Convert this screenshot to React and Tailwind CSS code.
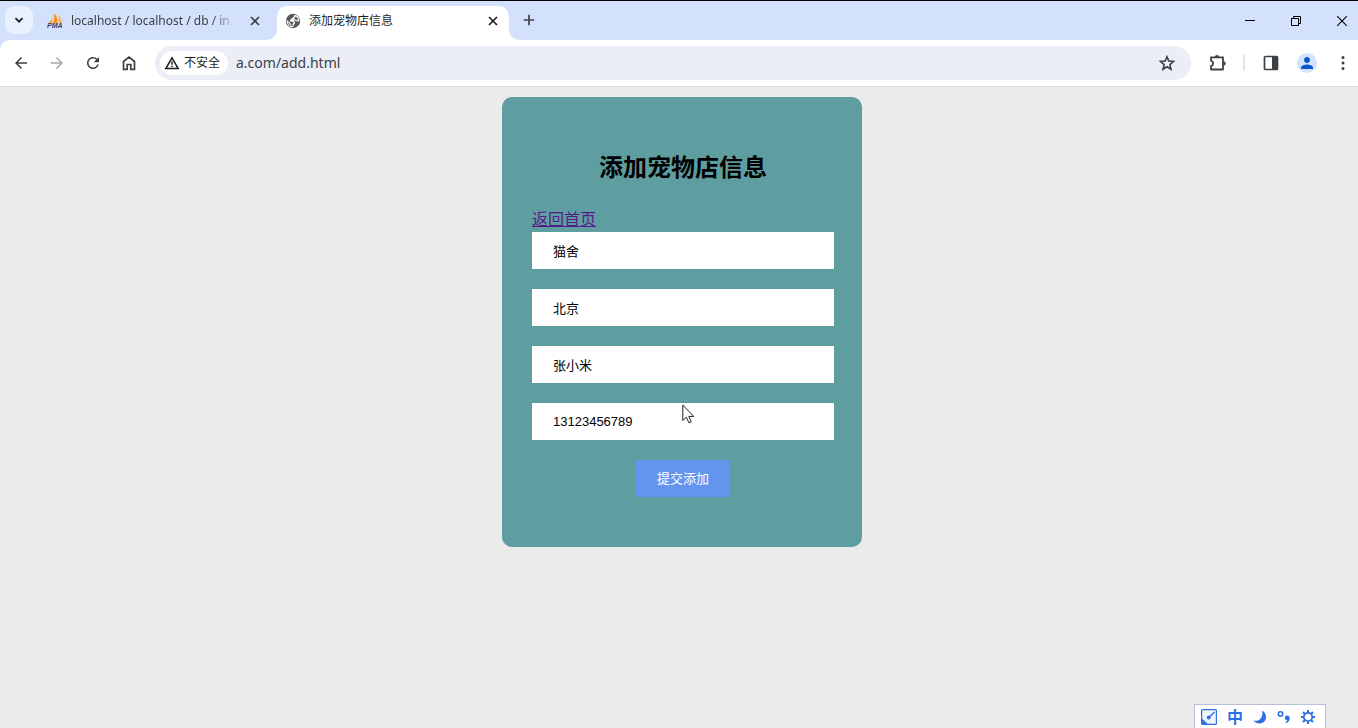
import React from "react";
import { MdArrowBack, MdArrowForward, MdPerson, MdRefresh } from "react-icons/md";

const fields = [
  { name: "shop", label: "店名", value: "猫舍" },
  { name: "address", label: "地址", value: "北京" },
  { name: "owner", label: "店主", value: "张小米" },
  { name: "phone", label: "电话", value: "13123456789" },
];

const pmaLogo = (
  <svg viewBox="0 0 16 16" className="h-4 w-4 shrink-0">
    <path d="M5.500 2C5.500 5.500 4 8.500 .8 10.500h4.700z" fill="#f7a440" />
    <path d="M7 .3c3 2.700 3.700 6.700 3 10.200H6.200C7.400 7 7.500 4 7 .3z" fill="#f08a1d" />
    <path d="M11 1.800c2.500 2.200 3.800 5.200 4.200 8.700h-4c.6-2.500 .6-5.500-.2-8.700z" fill="#f9b65c" />
    <text
      x="0"
      y="15"
      fontSize="7"
      fontWeight="700"
      fontStyle="italic"
      fontFamily="Liberation Sans, sans-serif"
      fill="#3b3f63"
    >
      PMA
    </text>
  </svg>
);

const globeIcon = (
  <svg viewBox="0 0 16 16" className="h-4 w-4 shrink-0">
    <circle cx="8" cy="8" r="7.200" fill="#55585c" />
    <path
      d="M9.300 2.300C10.500 3.800 9.800 4.700 8.300 5c-1.600.3-.9 1.500-2 1.700-1.300.3-1.200 1.200 0 1.300 1.700.1 3 .3 3.200 1.700.2 1.300-1.300 1.300-1.300 2.400 0 .8-.4 1.400-.9 1.700C4.300 13.500 2.200 11 2.200 8c1.200 1.300 2.300 1.200 2.600 2.300.2.800 1.300.6 1.400 1.700M9.600 2.400C12 3.100 13.700 5.200 13.800 7.800c-1.300.4-1.800-.3-2.600-.4-1.400-.2-2.300-.7-1.700-1.700"
      fill="none"
      stroke="#fff"
      strokeWidth="1.100"
    />
    <path d="M9.300 2.200l-1.100 2.900-2.400 1.400-.3 1.400 3.200.6.900 1.500-1.200 1.500z" fill="#fff" />
  </svg>
);

const closeIcon = (
  <svg viewBox="0 0 14 14" className="h-[14px] w-[14px]" stroke="currentColor" strokeWidth="1.700">
    <path d="M3 3l8 8M11 3l-8 8" />
  </svg>
);

const plusIcon = (
  <svg viewBox="0 0 16 16" className="h-4 w-4" stroke="currentColor" strokeWidth="1.700">
    <path d="M8 2.800v10.400M2.800 8h10.400" />
  </svg>
);

const starIcon = (
  <svg viewBox="0 0 18 18" className="h-[18px] w-[18px]" fill="none" stroke="currentColor" strokeWidth="1.600">
    <path d="M9 2.800l1.800 4.300 4.700.4-3.600 3.100 1.100 4.600L9 12.700l-4 2.500 1.100-4.600-3.600-3.100 4.700-.4z" />
  </svg>
);

const homeIcon = (
  <svg viewBox="0 0 16 16" className="h-4 w-4" fill="none" stroke="currentColor" strokeWidth="1.700">
    <path d="M2.500 14.300V6.500L8 2l5.500 4.500v7.800h-3.700V9.500H6.200v4.800z" />
  </svg>
);

const warningIcon = (
  <svg viewBox="0 0 16 16" className="h-4 w-4" fill="none" stroke="currentColor" strokeWidth="1.500">
    <path d="M8 2.800L14.200 13.500H1.800z" />
    <path d="M8 6.500v3.300M8 10.700v1.400" />
  </svg>
);

const puzzleIcon = (
  <svg viewBox="0 0 20 20" className="h-5 w-5">
    <path
      d="M4 4.300h12v12.200H4v-3.300c2.800-.9 2.800-4.700 0-5.600z"
      fill="none"
      stroke="currentColor"
      strokeWidth="1.800"
      strokeLinejoin="round"
    />
    <path d="M7.900 4a2.100 2.100 0 0 1 4.200 0zM16.500 8.200a2.200 2.200 0 0 1 0 4.400z" fill="currentColor" />
  </svg>
);

const sidePanelIcon = (
  <svg viewBox="0 0 16 16" className="h-4 w-4">
    <rect x="1.500" y="1.500" width="13" height="13" rx="1" fill="none" stroke="currentColor" strokeWidth="1.700" />
    <path d="M9 2h5v12H9z" fill="currentColor" />
  </svg>
);

const cursor = (
  <svg
    viewBox="0 0 13 20"
    className="pointer-events-none absolute left-[180px] top-[307px] h-5 w-[13px]"
    fill="#fff"
    stroke="#222"
  >
    <path d="M.8 1v15.500l3.600-3.300 2.500 5.600 2.300-1-2.400-5.400h4.900z" />
  </svg>
);

function IconButton({ label, className = "", children }) {
  return (
    <button
      aria-label={label}
      className={["flex h-9 w-9 shrink-0 items-center justify-center", className].join(" ")}
    >
      {children}
    </button>
  );
}

function TabStrip() {
  return (
    <div className="flex h-10 items-end border-t border-black text-xs text-[#3c4043]">
      <button
        aria-label="搜索标签页"
        className="mb-[6px] ml-[5px] flex h-7 w-7 shrink-0 items-center justify-center rounded-[9px] bg-[#e9f0fe] text-[#1f1f1f]"
      >
        <svg viewBox="0 0 10 10" className="h-[10px] w-[10px]" fill="none" stroke="currentColor" strokeWidth="1.800">
          <path d="M1.500 3.200L5 6.700l3.500-3.500" />
        </svg>
      </button>

      <div className="ml-[6px] flex h-[34px] w-[238px] items-center pb-1 pl-2 pr-[15px]">
        {pmaLogo}
        <span className="ml-2 whitespace-nowrap [mask-image:linear-gradient(to_right,black_88%,rgba(0,0,0,0.3))]">
          localhost / localhost / db / in
        </span>
        <button aria-label="关闭标签页" className="ml-auto">
          {closeIcon}
        </button>
      </div>

      {/* active tab, the pseudo elements are its curved feet */}
      <div className="relative flex h-[34px] w-[232px] items-center rounded-t-[10px] bg-white pb-1 pl-2 pr-[9px] text-[#1f1f1f] before:absolute before:-left-[10px] before:bottom-0 before:h-[10px] before:w-[10px] before:rounded-br-[10px] before:shadow-[4px_4px_0_4px_#fff] after:absolute after:-right-[10px] after:bottom-0 after:h-[10px] after:w-[10px] after:rounded-bl-[10px] after:shadow-[-4px_4px_0_4px_#fff]">
        {globeIcon}
        <span className="ml-2">添加宠物店信息</span>
        <button aria-label="关闭标签页" className="ml-auto">
          {closeIcon}
        </button>
      </div>

      <button aria-label="新标签页" className="mb-3 ml-3 text-[#3c4043]">
        {plusIcon}
      </button>

      <div className="ml-auto flex h-full items-center text-black">
        <button aria-label="最小化" className="flex w-[46px] justify-center">
          <svg viewBox="0 0 10 10" className="h-[10px] w-[10px]" stroke="currentColor">
            <path d="M0 4.500h10" />
          </svg>
        </button>
        <button aria-label="还原" className="flex w-[46px] justify-center">
          <svg viewBox="0 0 10 10" className="h-[10px] w-[10px]" fill="none" stroke="currentColor">
            <path d="M.5 2.500h7v7h-7zM2.500 2.500v-2h7v7h-2" />
          </svg>
        </button>
        <button aria-label="关闭" className="flex w-[39px] justify-center pl-[7px]">
          <svg viewBox="0 0 10 10" className="h-[10px] w-[10px]" stroke="currentColor" strokeWidth="1.100">
            <path d="M0 0l10 10M10 0L0 10" />
          </svg>
        </button>
      </div>
    </div>
  );
}

function Toolbar() {
  return (
    <div className="relative flex h-[47px] items-center rounded-tl-[10px] border-b border-[#dcdcdc] bg-white pl-[3px] text-[#3c4043]">
      <IconButton label="后退">
        <MdArrowBack className="h-[18px] w-[18px]" />
      </IconButton>
      <IconButton label="前进" className="text-[#a5a7aa]">
        <MdArrowForward className="h-[18px] w-[18px]" />
      </IconButton>
      <IconButton label="重新加载">
        <MdRefresh className="h-[18px] w-[18px]" />
      </IconButton>
      <IconButton label="主页">{homeIcon}</IconButton>

      <div className="ml-2 flex h-[34px] flex-1 items-center rounded-full bg-[#ebedf7] pl-[5px] pr-[6px]">
        <button className="flex h-6 shrink-0 items-center gap-1 rounded-full bg-white pl-1 pr-2 text-xs text-[#1f1f1f]">
          {warningIcon}
          <span>不安全</span>
        </button>
        <input
          aria-label="地址"
          defaultValue="a.com/add.html"
          className="ml-2 min-w-0 flex-1 bg-transparent text-sm text-[#3c4043] outline-none"
        />
        <IconButton label="收藏">{starIcon}</IconButton>
      </div>

      <IconButton label="扩展程序" className="ml-2">
        {puzzleIcon}
      </IconButton>
      <div className="mx-2 h-4 w-[2px] bg-[#dfe3ee]" />
      <IconButton label="侧边栏">{sidePanelIcon}</IconButton>
      <IconButton label="个人资料">
        <span className="flex h-5 w-5 items-center justify-center rounded-full bg-[#d3e3fd] text-[#0b57d0]">
          <MdPerson className="h-[18px] w-[18px]" />
        </span>
      </IconButton>
      <IconButton label="菜单" className="-mr-[3px]">
        <svg viewBox="0 0 4 16" className="h-4 w-1" fill="currentColor">
          <circle cx="2" cy="2.500" r="1.500" />
          <circle cx="2" cy="8" r="1.500" />
          <circle cx="2" cy="13.500" r="1.500" />
        </svg>
      </IconButton>
    </div>
  );
}

function AddForm() {
  return (
    <form
      onSubmit={(e) => e.preventDefault()}
      className="w-[360px] rounded-[10px] bg-[#5f9ea0] pb-[50px] pl-[30px] pr-7 pt-[55px] text-[13px]"
    >
      <h2 className="text-center text-2xl font-bold text-black">添加宠物店信息</h2>
      <a href="#home" className="mt-6 block w-fit text-base text-[#551a8b] underline">
        返回首页
      </a>
      <div className="flex flex-col gap-5">
        {fields.map((f) => (
          <input
            key={f.name}
            name={f.name}
            aria-label={f.label}
            defaultValue={f.value}
            className="h-[37px] w-full bg-white px-[21px] text-black outline-none"
          />
        ))}
      </div>
      <button
        type="submit"
        className="mx-auto mt-5 block h-[37px] rounded-[2px] bg-[#6495ed] px-[21px] text-white"
      >
        提交添加
      </button>
    </form>
  );
}

function InputMethodBar() {
  return (
    <div className="fixed bottom-0 right-8 flex h-6 w-[132px] items-center justify-between border border-b-0 border-[#b9bedb] bg-white pl-[6px] pr-[10px] text-[#2f6fe4]">
      <svg viewBox="0 0 16 16" className="h-4 w-4">
        <rect x=".6" y=".6" width="14.800" height="14.800" rx="1" fill="#eef5ff" stroke="currentColor" strokeWidth="1.200" />
        <path d="M1 9.500L7 15.300H1z" fill="currentColor" />
        <path d="M8 8.500l5.500-5.500" stroke="currentColor" strokeWidth="1.200" />
        <circle cx="7.800" cy="8.500" r="2" fill="currentColor" />
      </svg>
      <span className="text-base font-bold leading-4">中</span>
      <svg viewBox="0 0 14 14" className="h-[14px] w-[14px]" fill="currentColor">
        <path d="M9 .5c4.500 2.500 5.500 8 2 11.300-3 2.600-8 2-10.500-1.300 3 .8 5.500.2 7.200-2C9.500 6 9.800 3 9 .5z" />
      </svg>
      <svg viewBox="0 0 14 14" className="h-[14px] w-[14px]">
        <circle cx="3.500" cy="4" r="2.200" fill="none" stroke="currentColor" strokeWidth="1.600" />
        <path d="M9.500 5.500c2.200-.4 3.600 1.200 3.200 3.400-.4 2-1.600 3.400-3.700 4.300l-.4-1c1-.6 1.600-1.200 1.800-2-2.700.3-3.600-3.800-.9-4.700z" fill="currentColor" />
      </svg>
      <svg viewBox="0 0 14 14" className="h-[14px] w-[14px]" fill="none" stroke="currentColor">
        <circle cx="7" cy="7" r="4.200" strokeWidth="1.700" />
        <path
          d="M7 0v3M7 11v3M0 7h3M11 7h3M2 2l2.200 2.200M9.800 9.800L12 12M12 2L9.800 4.200M4.200 9.800L2 12"
          strokeWidth="2"
        />
      </svg>
    </div>
  );
}

export default function App() {
  return (
    <div className="flex min-h-screen flex-col bg-[#ebebeb] font-['Noto_Sans','Noto_Sans_CJK_SC',sans-serif]">
      <header className="bg-[#d3e1fc]">
        <TabStrip />
        <Toolbar />
      </header>
      <main className="flex flex-1 justify-center pl-[6px] pt-[10px] font-['Liberation_Sans','Noto_Sans_CJK_SC',sans-serif]">
        <div className="relative">
          <AddForm />
          {cursor}
        </div>
      </main>
      <InputMethodBar />
    </div>
  );
}
